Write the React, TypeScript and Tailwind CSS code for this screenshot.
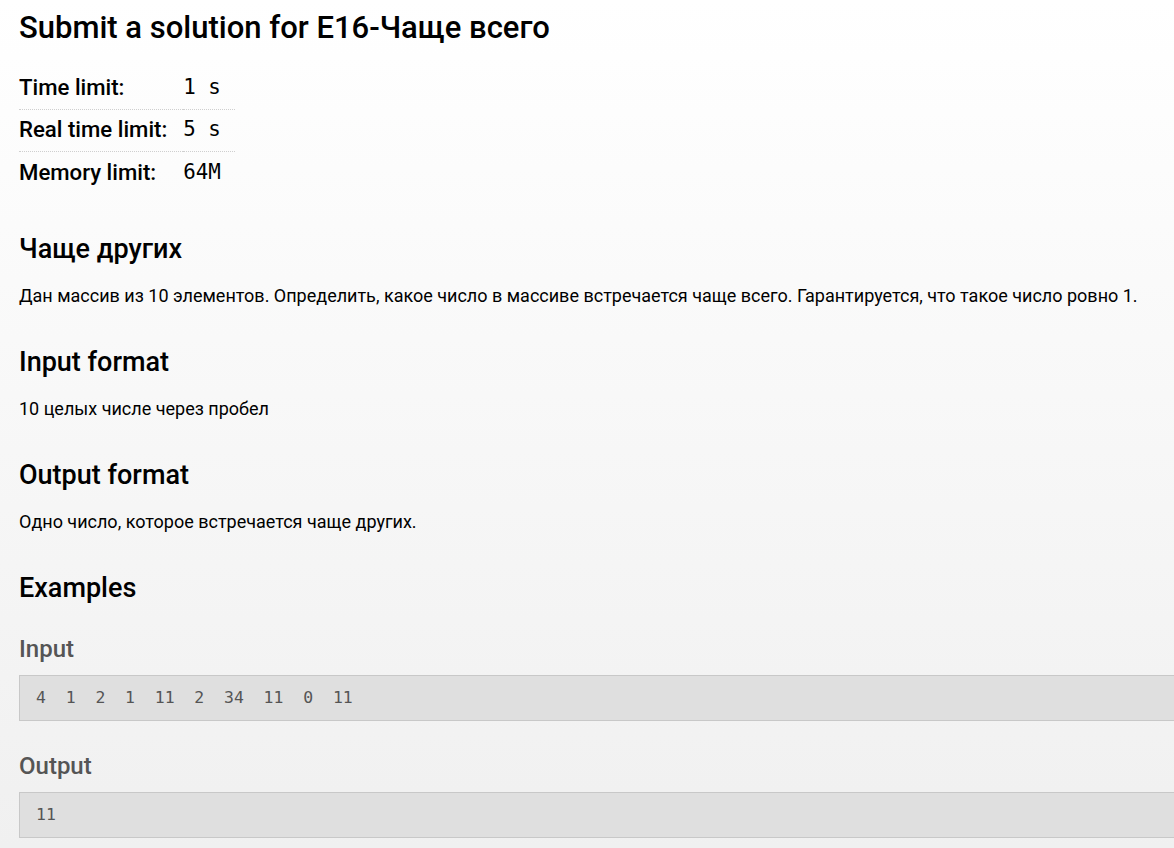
import React from "react";

const limits = [
  { label: "Time limit:", value: "1 s" },
  { label: "Real time limit:", value: "5 s" },
  { label: "Memory limit:", value: "64M" },
];

const mono = "font-['DejaVu_Sans_Mono',monospace]";

const Section = ({ title, text, first }: { title: string; text: string; first?: boolean }) => (
  <div>
    <h2 className={`text-[27px] font-medium leading-[34px] text-black ${first ? "mt-[39px]" : "mt-[36px]"}`}>
      {title}
    </h2>
    <p className="text-[18px] leading-[27px] mt-[16px] text-black">{text}</p>
  </div>
);

const Example = ({ title, code }: { title: string; code: string }) => (
  <div>
    <h3 className="text-[24px] font-medium leading-[30px] text-[#555]">{title}</h3>
    <pre
      className={`${mono} mt-[11px] -mr-[20px] h-[46px] border border-[#c8c8c8] bg-[#dfdfdf] pl-[16px] text-[16.45px] leading-[44px] text-[#555]`}
    >
      {code}
    </pre>
  </div>
);

export default function App() {
  return (
    <div className="min-h-screen bg-gradient-to-b from-white to-[#f0f0f0] pl-[19px] font-['Roboto',sans-serif] overflow-hidden">
      <h1 className="text-[31px] font-medium leading-[40px] pt-[8px] text-black">
        Submit a solution for E16-Чаще всего
      </h1>

      <table className="mt-[19px] border-collapse">
        <tbody>
          {limits.map((l, i) => (
            <tr
              key={l.label}
              className={i < limits.length - 1 ? "border-b border-dotted border-[#cfcfcf]" : ""}
            >
              <td className="h-[42px] pr-4 text-[22.2px] font-medium text-black">{l.label}</td>
              <td className={`${mono} h-[42px] pr-[14px] pl-[-2px] text-[20.8px] text-black whitespace-pre`}>{l.value}</td>
            </tr>
          ))}
        </tbody>
      </table>

      <Section
        first
        title="Чаще других"
        text="Дан массив из 10 элементов. Определить, какое число в массиве встречается чаще всего. Гарантируется, что такое число ровно 1."
      />
      <Section title="Input format" text="10 целых числе через пробел" />
      <Section title="Output format" text="Одно число, которое встречается чаще других." />

      <h2 className="text-[27px] font-medium leading-[34px] mt-[36px] text-black">Examples</h2>

      <div className="mt-[29px] flex flex-col gap-[30px]">
        <Example title="Input" code="4  1  2  1  11  2  34  11  0  11" />
        <Example title="Output" code="11" />
      </div>
    </div>
  );
}
